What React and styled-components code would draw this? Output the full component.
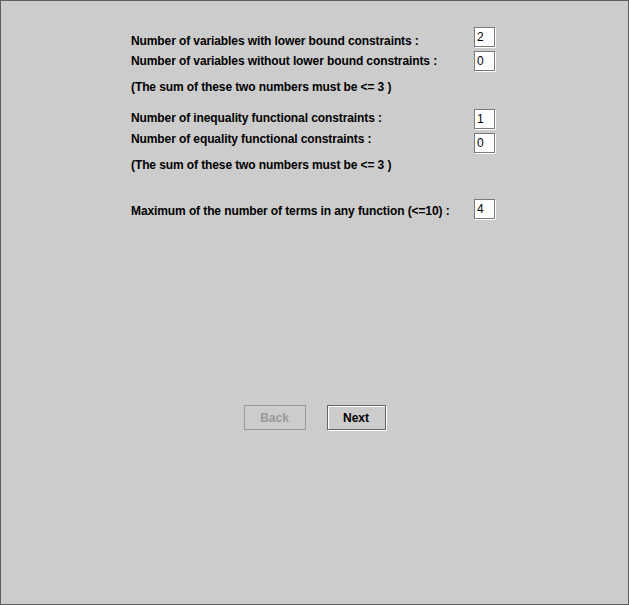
import styled, { createGlobalStyle } from "styled-components";

const GlobalStyle = createGlobalStyle`
  html, body {
    margin: 0;
    padding: 0;
    background: #cccccc;
  }
  body {
    font-family: "Liberation Sans", Arial, sans-serif;
  }
`;

const Frame = styled.div`
  width: 629px;
  height: 605px;
  box-sizing: border-box;
  border: 1px solid #5f5f5f;
  background: #cccccc;
  display: flex;
  flex-direction: column;
`;

const Form = styled.div`
  padding: 26px 0 0 130px;
  display: flex;
  flex-direction: column;
`;

const Row = styled.div`
  display: flex;
  align-items: flex-start;
  height: 20px;
  margin-top: ${({ $gap }) => $gap || 0}px;
`;

const Label = styled.div`
  width: 343px;
  font-size: 12px;
  font-weight: bold;
  line-height: 14px;
  color: #000;
  padding-top: ${({ $shift }) => $shift || 0}px;
  white-space: nowrap;
  letter-spacing: -0.1px;
`;

const Note = styled.div`
  font-size: 12px;
  font-weight: bold;
  line-height: 14px;
  color: #000;
  margin-top: ${({ $gap }) => $gap || 0}px;
  letter-spacing: -0.1px;
`;

const Field = styled.div`
  width: 17px;
  height: 18px;
  box-sizing: content-box;
  border: 1px solid #7a7a7a;
  box-shadow: 1px 1px 0 #ffffff;
  background: #ffffff;
  font-size: 12px;
  line-height: 18px;
  padding-left: 2px;
  margin-top: ${({ $shift }) => $shift || 0}px;
  color: #000;
`;

const Buttons = styled.div`
  display: flex;
  justify-content: center;
  gap: 21px;
  margin-top: 186px;
`;

const Button = styled.button`
  height: 25px;
  width: ${({ $w }) => $w}px;
  box-sizing: border-box;
  padding: 0;
  background: #cccccc;
  font-family: "Liberation Sans", Arial, sans-serif;
  font-size: 12px;
  font-weight: bold;
  color: ${({ disabled }) => (disabled ? "#999999" : "#000000")};
  border: 1px solid ${({ disabled }) => (disabled ? "#999999" : "#666666")};
  box-shadow: ${({ disabled }) =>
    disabled ? "none" : "1px 1px 0 #ffffff, inset 1px 1px 0 #ffffff"};
  cursor: default;
`;

export default function App() {
  return (
    <>
      <GlobalStyle />
      <Frame>
        <Form>
          <Row>
            <Label $shift={7}>Number of variables with lower bound constraints :</Label>
            <Field>2</Field>
          </Row>
          <Row $gap={4}>
            <Label $shift={3}>Number of variables without lower bound constraints :</Label>
            <Field>0</Field>
          </Row>
          <Note $gap={9}>(The sum of these two numbers must be &lt;= 3 )</Note>
          <Row $gap={14}>
            <Label $shift={3}>Number of inequality functional constraints :</Label>
            <Field $shift={1}>1</Field>
          </Row>
          <Row $gap={3}>
            <Label $shift={1}>Number of equality functional constraints :</Label>
            <Field $shift={2}>0</Field>
          </Row>
          <Note $gap={7}>(The sum of these two numbers must be &lt;= 3 )</Note>
          <Row $gap={27}>
            <Label $shift={5}>Maximum of the number of terms in any function (&lt;=10) :</Label>
            <Field>4</Field>
          </Row>
        </Form>
        <Buttons>
          <Button $w={62} disabled>
            Back
          </Button>
          <Button $w={59}>Next</Button>
        </Buttons>
      </Frame>
    </>
  );
}
